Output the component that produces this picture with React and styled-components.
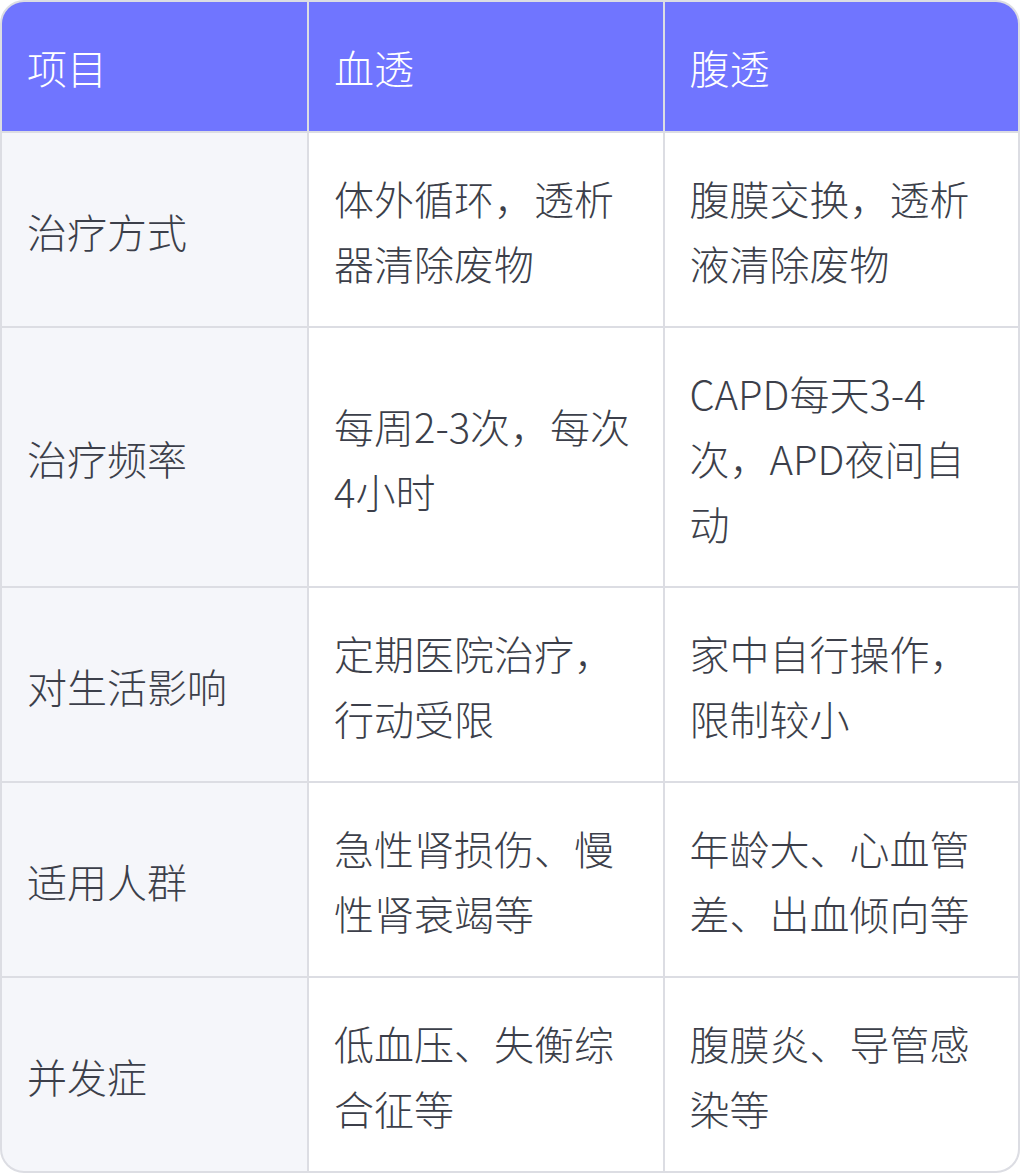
import styled, { createGlobalStyle } from "styled-components";

const GlobalStyle = createGlobalStyle`
  html, body {
    margin: 0;
    padding: 0;
    background: #ffffff;
  }
  body {
    font-family: "Noto Sans CJK SC", "Noto Sans", sans-serif;
  }
`;

const Table = styled.div`
  width: 1020px;
  box-sizing: border-box;
  display: grid;
  grid-template-columns: 305px 1fr 1fr;
  gap: 2px;
  background-color: #dcdde3;
  border: 2px solid #dcdde3;
  border-radius: 24px;
  overflow: hidden;
`;

const HeadCell = styled.div`
  background-color: #7075ff;
  color: #ffffff;
  font-size: 40px;
  font-weight: 300;
  line-height: 65px;
  padding: 33px 24px 31px 25px;
`;

const Cell = styled.div`
  background-color: ${({ $label }) => ($label ? "#f5f6fa" : "#ffffff")};
  color: #3c3f4a;
  font-size: 40px;
  font-weight: 300;
  line-height: 65px;
  padding: 33px 24px 30px 25px;
  display: flex;
  align-items: center;
`;

const headers = ["项目", "血透", "腹透"];

const rows = [
  ["治疗方式", "体外循环，透析器清除废物", "腹膜交换，透析液清除废物"],
  ["治疗频率", "每周2-3次，每次4小时", "CAPD每天3-4次，APD夜间自动"],
  ["对生活影响", "定期医院治疗，行动受限", "家中自行操作，限制较小"],
  ["适用人群", "急性肾损伤、慢性肾衰竭等", "年龄大、心血管差、出血倾向等"],
  ["并发症", "低血压、失衡综合征等", "腹膜炎、导管感染等"],
];

export default function App() {
  return (
    <>
      <GlobalStyle />
      <Table>
        {headers.map((h) => (
          <HeadCell key={h}>{h}</HeadCell>
        ))}
        {rows.map((row) =>
          row.map((text, i) => (
            <Cell key={row[0] + i} $label={i === 0}>
              <span>{text}</span>
            </Cell>
          ))
        )}
      </Table>
    </>
  );
}
